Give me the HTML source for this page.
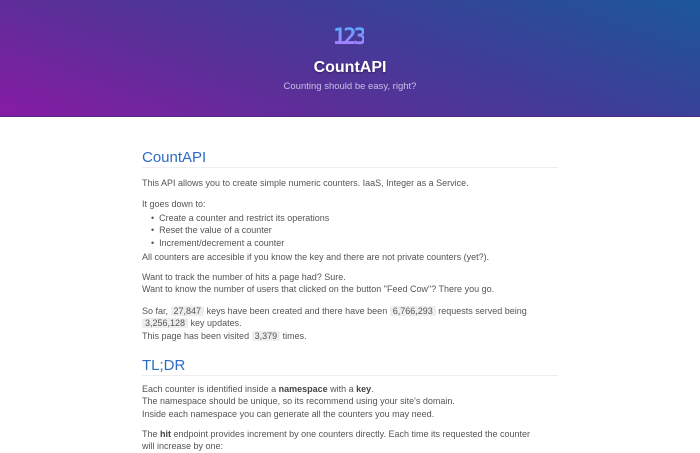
<!DOCTYPE html>
<html><head><meta charset="utf-8"><style>
*{margin:0;padding:0;box-sizing:border-box}
body{width:700px;height:450px;overflow:hidden;background:#fff;font-family:"Liberation Sans",sans-serif;color:#555;font-size:9px}
.hdr{height:117px;background:linear-gradient(20deg,#871ca4 0%,#5a2f98 35%,#3c3f98 65%,#1b5899 100%);position:relative;border-bottom:1px solid #4a2a80}
.logo{position:absolute;left:333px;top:25px;font:bold 22px "DejaVu Sans Mono",monospace;letter-spacing:-3px;background:linear-gradient(180deg,#4fb0ff,#c070ff);-webkit-background-clip:text;color:transparent}
.t{position:absolute;left:0;width:700px;text-align:center;top:59px;color:#fff;font-weight:bold;font-size:16px;text-shadow:0 1px 2px rgba(0,0,0,.4)}
.s{position:absolute;left:0;width:700px;text-align:center;top:81px;color:#c8bfe6;font-size:9.5px}
.c{position:absolute;left:142px;width:416px;top:0}
h2{position:absolute;left:0;width:416px;font-weight:normal;color:#2c6cc4;font-size:15px;border-bottom:1px solid #eee;height:18px;line-height:16px}
p{position:absolute;left:0;white-space:nowrap;line-height:12.3px}
code{background:#eee;border-radius:2px;padding:0 3px;font-family:"Liberation Sans",sans-serif}
b{color:#444}
</style></head><body>
<div class="hdr"><div class="logo">123</div><div class="t">CountAPI</div><div class="s">Counting should be easy, right?</div></div>
<div class="c">
<h2 style="top:150px">CountAPI</h2>
<p style="top:177px">This API allows you to create simple numeric counters. IaaS, Integer as a Service.</p>
<p style="top:198px">It goes down to:</p>
<p style="top:212px;left:9px">•&nbsp; Create a counter and restrict its operations<br>•&nbsp; Reset the value of a counter<br>•&nbsp; Increment/decrement a counter</p>
<p style="top:251px">All counters are accesible if you know the key and there are not private counters (yet?).</p>
<p style="top:271px">Want to track the number of hits a page had? Sure.<br>Want to know the number of users that clicked on the button "Feed Cow"? There you go.</p>
<p style="top:305px">So far, <code>27,847</code> keys have been created and there have been <code>6,766,293</code> requests served being<br><code>3,256,128</code> key updates.<br>This page has been visited <code>3,379</code> times.</p>
<h2 style="top:358px">TL;DR</h2>
<p style="top:383px">Each counter is identified inside a <b>namespace</b> with a <b>key</b>.<br>The namespace should be unique, so its recommend using your site's domain.<br>Inside each namespace you can generate all the counters you may need.</p>
<p style="top:428px">The <b>hit</b> endpoint provides increment by one counters directly. Each time its requested the counter<br>will increase by one:</p>
</div>
</body></html>
